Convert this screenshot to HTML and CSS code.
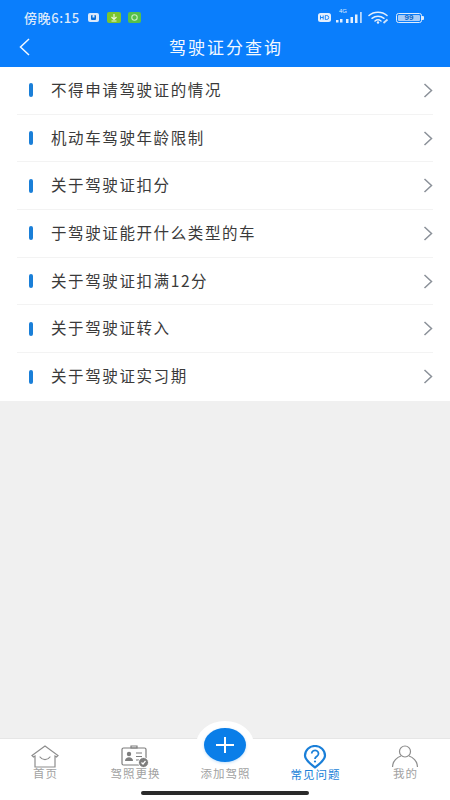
FILE: index.html
```html
<!DOCTYPE html>
<html lang="zh">
<head>
<meta charset="utf-8">
<title>驾驶证分查询</title>
<link rel="stylesheet" href="styles.css">
</head>
<body>
<div class="page">
  <header class="header">
    <div class="status">
      <div class="status-left">
        <span class="time">傍晚6:15</span>
        <svg class="si" width="13" height="11" viewBox="0 0 13 11"><rect x="1" y="1" width="11" height="9" rx="2" fill="#dbe9fb"/><rect x="4" y="3" width="5" height="5" rx="1" fill="#0a6fd8"/><rect x="5.5" y="3" width="2" height="2.5" fill="#dbe9fb"/></svg>
        <svg class="si si-a" width="14" height="11" viewBox="0 0 14 11"><rect width="14" height="11" rx="2" fill="#7cc52f"/><path d="M7 2v5M4.5 5 7 7.5 9.5 5M4.5 9h5" stroke="#eaf7d8" stroke-width="1.2" fill="none"/></svg>
        <svg class="si" width="13" height="11" viewBox="0 0 13 11"><rect width="13" height="11" rx="2" fill="#56c04a"/><circle cx="6.5" cy="5.5" r="2.7" stroke="#c9f0c0" stroke-width="1.1" fill="none"/></svg>
      </div>
      <div class="status-right">
        <svg width="13" height="9" viewBox="0 0 13 9"><rect width="13" height="9" rx="2.5" fill="#e4effd"/><path d="M2.5 2.5v4M5.2 2.5v4M2.500 4.500h2.700M7.300 2.500v4h1.400a2 2 0 0 0 0-4z" stroke="#0a7efc" stroke-width=".9" fill="none"/></svg>
        <span class="signal">
          <span class="net">4G</span>
          <svg width="27" height="13" viewBox="0 0 27 13"><g fill="#e4effd"><rect x="0" y="9" width="2.500" height="2.500"/><rect x="4" y="8" width="2.500" height="3.500"/><rect x="10" y="8" width="2.500" height="4"/><rect x="14.500" y="6" width="2.500" height="6"/><rect x="19" y="3.500" width="2.500" height="8.500"/><rect x="24" y="1" width="1.800" height="11" opacity=".8"/></g></svg>
        </span>
        <svg width="22" height="13" viewBox="0 0 22 13"><g fill="none" stroke="#e4effd" stroke-width="1.500" stroke-linecap="round"><path d="M1 4.500C6 .2 14 .2 19 4.500"/><path d="M4 7.300C7.500 4.500 12.500 4.500 16 7.300"/><path d="M7 10C8.700 8.600 11.300 8.600 13 10"/></g><circle cx="10" cy="11.500" r="1.200" fill="#e4effd"/><path d="M15.500 12l4-3.500" stroke="#cfe2fa" stroke-width="1.800"/></svg>
        <span class="battery"><span class="battery-level">99</span></span><span class="battery-tip"></span>
      </div>
    </div>
    <div class="nav">
      <svg class="back" width="13" height="18" viewBox="0 0 13 18"><path d="M11 1 2.500 9 11 17" fill="none" stroke="#f2f8ff" stroke-width="1.500"/></svg>
      <h1 class="title">驾驶证分查询</h1>
    </div>
  </header>

  <ul class="list">
    <li class="row"><span class="mark"></span><span class="label">不得申请驾驶证的情况</span><svg class="chev" width="10" height="15" viewBox="0 0 10 15"><path d="M1.500 1 8.500 7.500 1.500 14" fill="none" stroke="#8b9199" stroke-width="1.500"/></svg></li>
    <li class="row"><span class="mark"></span><span class="label">机动车驾驶年龄限制</span><svg class="chev" width="10" height="15" viewBox="0 0 10 15"><path d="M1.500 1 8.500 7.500 1.500 14" fill="none" stroke="#8b9199" stroke-width="1.500"/></svg></li>
    <li class="row"><span class="mark"></span><span class="label">关于驾驶证扣分</span><svg class="chev" width="10" height="15" viewBox="0 0 10 15"><path d="M1.500 1 8.500 7.500 1.500 14" fill="none" stroke="#8b9199" stroke-width="1.500"/></svg></li>
    <li class="row"><span class="mark"></span><span class="label">于驾驶证能开什么类型的车</span><svg class="chev" width="10" height="15" viewBox="0 0 10 15"><path d="M1.500 1 8.500 7.500 1.500 14" fill="none" stroke="#8b9199" stroke-width="1.500"/></svg></li>
    <li class="row"><span class="mark"></span><span class="label">关于驾驶证扣满12分</span><svg class="chev" width="10" height="15" viewBox="0 0 10 15"><path d="M1.500 1 8.500 7.500 1.500 14" fill="none" stroke="#8b9199" stroke-width="1.500"/></svg></li>
    <li class="row"><span class="mark"></span><span class="label">关于驾驶证转入</span><svg class="chev" width="10" height="15" viewBox="0 0 10 15"><path d="M1.500 1 8.500 7.500 1.500 14" fill="none" stroke="#8b9199" stroke-width="1.500"/></svg></li>
    <li class="row"><span class="mark"></span><span class="label">关于驾驶证实习期</span><svg class="chev" width="10" height="15" viewBox="0 0 10 15"><path d="M1.500 1 8.500 7.500 1.500 14" fill="none" stroke="#8b9199" stroke-width="1.500"/></svg></li>
  </ul>

  <div class="spacer"></div>

  <nav class="tabs">
    <div class="tab">
      <svg width="28" height="23" viewBox="0 0 28 23"><g fill="none" stroke="#8d8d8d" stroke-width="1.200"><path d="M1 10.500 14 1l13 9.500-1.500 1.500-1.500-1v11H4V11l-1.500 1z"/><path d="M9 12c2.500 3.500 7.500 3.500 10 0" stroke-linecap="round"/></g></svg>
      <span class="tab-label">首页</span>
    </div>
    <div class="tab">
      <svg width="28" height="23" viewBox="0 0 28 23"><g fill="none" stroke="#7d7d7d" stroke-width="1.200"><rect x="1" y="3" width="24" height="17" rx="1.500"/><path d="M10 1h6v2h-6zM15 8h6M15 11.500h6M15 15h3"/></g><circle cx="8" cy="9" r="2.200" fill="#7d7d7d"/><path d="M4 16c0-5 8-5 8 0z" fill="#7d7d7d"/><circle cx="22.500" cy="17.500" r="5" fill="#7d7d7d" stroke="#fff"/><path d="M20.500 17.500l1.500 1.500 2.500-3" stroke="#fff" stroke-width="1.200" fill="none"/></svg>
      <span class="tab-label">驾照更换</span>
    </div>
    <div class="tab tab-add">
      <span class="add-halo"><span class="add-btn"><svg width="18" height="16" viewBox="0 0 18 16"><path d="M9 0v16M0 8h18" stroke="#fff" stroke-width="2"/></svg></span></span>
      <span class="tab-label tab-add-label">添加驾照</span>
    </div>
    <div class="tab">
      <svg width="24" height="24" viewBox="0 0 24 24"><path d="M12 22.500C8 19 2 15.500 2 10.500A10 9.500 0 0 1 22 10.500C22 15.500 16 19 12 22.500Z" fill="none" stroke="#1a7fd8" stroke-width="2.200" stroke-linejoin="round"/><path d="M8.700 8.500a3.400 3.200 0 1 1 5.300 2.700c-1.200.8-2 1.300-2 2.700" fill="none" stroke="#1a7fd8" stroke-width="1.800"/><circle cx="12" cy="16.500" r="1.100" fill="#1a7fd8"/></svg>
      <span class="tab-label tab-active">常见问题</span>
    </div>
    <div class="tab">
      <svg width="28" height="23" viewBox="0 0 28 23"><g fill="none" stroke="#8d8d8d" stroke-width="1.200"><circle cx="14" cy="6.500" r="5.500"/><path d="M1.500 22c0-6 5-10 8.500-11M26.500 22c0-6-5-10-8.500-11"/></g></svg>
      <span class="tab-label">我的</span>
    </div>
    <span class="home-bar"></span>
  </nav>
</div>
</body>
</html>
```

FILE: styles.css
```css
* { box-sizing: border-box; }
html, body { margin: 0; padding: 0; }
body { font-family: "Noto Sans CJK SC", "Noto Sans", sans-serif; background: #f0f0f0; }
.page { width: 450px; height: 800px; display: flex; flex-direction: column; overflow: hidden; }

.header { height: 67px; background: #0a7efc; color: #f2f8ff; flex: none; }
.status { height: 33px; display: flex; justify-content: space-between; align-items: center; padding: 2px 26px 0 24px; }
.status-left { display: flex; align-items: center; gap: 7px; }
.time { font-size: 13px; font-weight: 500; letter-spacing: .6px; color: #dbe9fb; }
.status-right { display: flex; align-items: center; gap: 5px; }
.signal { position: relative; display: block; height: 13px; }
.signal svg { display: block; }
.net { position: absolute; left: 3px; top: -3px; font: 6px/7px "Liberation Sans", sans-serif; color: #dfecfc; }
.battery { width: 26px; height: 10px; border: 1px solid #dfecfc; border-radius: 2.500px; padding: 1px; display: flex; margin-left: 1px; }
.battery-level { flex: 1; background: #a9cdf7; border-radius: 1px; font: bold 8px/6px "Liberation Sans", sans-serif; color: #0a66c8; text-align: center; }
.battery-tip { width: 2px; height: 4px; background: #dfecfc; border-radius: 0 1px 1px 0; margin-left: -5px; }

.nav { height: 34px; position: relative; display: flex; align-items: center; justify-content: center; padding-bottom: 8px; }
.back { position: absolute; left: 18px; top: 5px; }
.title { margin: 0; font-size: 17px; font-weight: 400; letter-spacing: 2px; margin-right: -2px; }

.list { list-style: none; margin: 0; padding: 0; background: #fff; flex: none; }
.row { height: 47.700px; margin: 0 17px; display: flex; align-items: center; padding-left: 12px; border-bottom: 1px solid #f3f3f3; }
.row:last-child { border-bottom: none; height: 47.500px; }
.mark { width: 4px; height: 14px; border-radius: 2px; background: #1a7fd8; flex: none; }
.label { flex: 1; margin-left: 18px; padding-bottom: 3px; font-size: 15.500px; letter-spacing: 1.600px; color: #3a3a3a; }
.chev { flex: none; }

.spacer { flex: 1; }

.tabs { height: 62px; flex: none; background: #fff; border-top: 1px solid #e6e6e6; display: flex; position: relative; padding-top: 6px; }
.tab { flex: 1; display: flex; flex-direction: column; align-items: center; }
.tab-label { font-size: 11.500px; letter-spacing: 1px; margin-right: -1px; line-height: 14px; color: #a2a2a2; margin-top: -2px; }
.tab-active { color: #1a7fd8; }
.tab-add { position: relative; }
.tab-add-label { position: absolute; top: 21px; margin-top: 0; }
.add-halo { position: absolute; top: -24px; left: 50%; margin-left: -29px; width: 58px; height: 48px; border-radius: 50%; background: #fff; display: flex; align-items: center; justify-content: center; }
.add-btn { width: 42px; height: 34px; border-radius: 50%; background: #0a7ee8; display: flex; align-items: center; justify-content: center; box-shadow: 0 1px 3px rgba(10,126,232,.25); }
.home-bar { position: absolute; left: 141px; top: 52px; width: 168px; height: 4px; border-radius: 2px; background: #2a2a2a; }
```
